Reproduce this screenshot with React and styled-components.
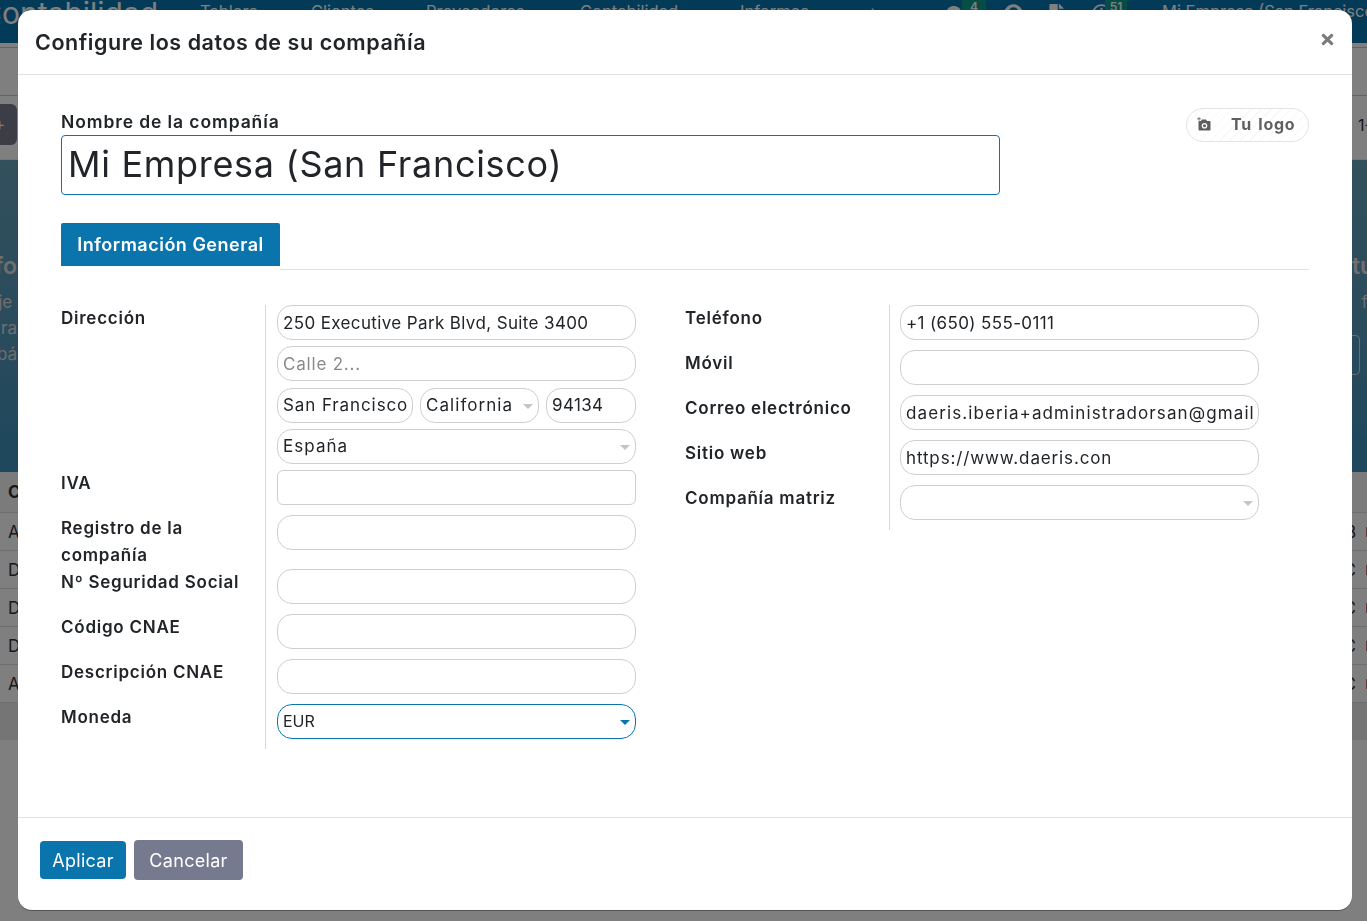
import React from 'react';
import styled, { createGlobalStyle } from 'styled-components';
import { FaTimes, FaComments, FaQuestionCircle, FaFile, FaRegClock } from 'react-icons/fa';

const Global = createGlobalStyle`
  html, body { margin: 0; height: 100%; overflow: hidden; }
  body { font-family: Inter, "Noto Sans", sans-serif; color: #212529; background: #fff; }
  * { box-sizing: border-box; }
`;

/* ---- page behind the dialog ---- */
const Page = styled.div`
  height: 921px;
  display: flex;
  flex-direction: column;
  overflow: hidden;
`;

const TopBar = styled.header`
  height: 43px;
  flex: none;
  background: #0674b0;
  color: #fff;
  display: flex;
  align-items: flex-start;
  padding-top: 1px;
  white-space: nowrap;
  overflow: hidden;
`;

const AppName = styled.div`
  font-size: 30px;
  line-height: 30px;
  width: 220px;
  flex: none;
  margin: -3px 0 0 -20px;
`;

const NavItem = styled.div`
  font-size: 16.5px;
  line-height: 20px;
  width: ${p => p.$w}px;
  flex: none;
`;

const NavIcon = styled.div`
  width: ${p => p.$w}px;
  flex: none;
  position: relative;
  font-size: 19px;
  padding-top: 3px;
  svg { display: block; }
`;

const NavBadge = styled.span`
  position: absolute;
  top: -1px;
  left: ${p => p.$left}px;
  width: ${p => p.$w}px;
  height: 13px;
  background: #0a9a8a;
  font-size: 12px;
  line-height: 13px;
  font-weight: 600;
  text-align: center;
`;

const ControlPanel = styled.section`
  height: 117px;
  flex: none;
  background: #fff;
  border-bottom: 1px solid #eee;
  display: flex;
  flex-direction: column;
`;

const PanelLine = styled.div`
  height: 5px;
  border-bottom: 1px solid #c8c8c8;
  flex: none;
`;

const PanelSearch = styled.div`
  height: 48px;
  border-bottom: 1px solid #c8c8c8;
  flex: none;
`;

const PanelRow = styled.div`
  flex: 1;
  display: flex;
  justify-content: space-between;
  align-items: center;
  font-size: 16px;
  padding-bottom: 6px;
`;

const NewButton = styled.div`
  width: 17px;
  height: 41px;
  background: #787a8e;
  border-radius: 0 6px 6px 0;
  color: #fff;
  font-size: 17px;
  line-height: 41px;
  text-indent: -6px;
  overflow: hidden;
`;

const Pager = styled.div`
  width: 9px;
  overflow: hidden;
  color: #333;
`;

const Banner = styled.section`
  height: 312px;
  flex: none;
  background: linear-gradient(180deg, #66a0b8 0%, #4d94b8 70%, #3b8fb8 100%);
  color: #fff;
  display: flex;
  justify-content: space-between;
  padding-top: 92px;
`;

const BannerSide = styled.div`
  width: ${p => p.$w}px;
  overflow: hidden;
  display: flex;
  flex-direction: column;
  align-items: ${p => p.$end ? 'flex-end' : 'flex-start'};
`;

const BannerTitle = styled.div`
  font-size: 23px;
  font-weight: 600;
  line-height: 28px;
  margin-bottom: 9px;
  color: #ddd;
`;

const BannerLine = styled.div`
  font-size: 17px;
  line-height: 26px;
  color: #ddd;
`;

const BannerButton = styled.div`
  width: 8px;
  height: 40px;
  margin-top: 20px;
  border: 1px solid #ddd;
  border-left: 0;
  border-radius: 0 5px 5px 0;
`;

const Table = styled.section`
  flex: none;
  background: #fff;
`;

const HeadRow = styled.div`
  height: 41px;
  background: #f6f6f6;
  display: flex;
  align-items: center;
  padding-left: 8px;
  font-weight: 700;
  font-size: 17px;
  color: #333;
  border-bottom: 1px solid #ddd;
`;

const BodyRow = styled.div`
  height: 38px;
  display: flex;
  justify-content: space-between;
  align-items: center;
  padding-left: 8px;
  font-size: 17px;
  color: #333;
  border-bottom: 1px solid #ddd;
`;

const RowEnd = styled.span`
  display: flex;
  align-items: center;
  gap: 10px;
  margin-right: -2px;
  &::after {
    content: '';
    width: 3px;
    height: 10px;
    background: #d0707f;
  }
`;

const TableFoot = styled.div`
  height: 37px;
  background: #ebebeb;
`;

/* ---- dialog ---- */
const Backdrop = styled.div`
  position: fixed;
  inset: 0;
  background: rgba(0, 0, 0, 0.5);
`;

const Modal = styled.div`
  position: fixed;
  left: 18px;
  top: 10px;
  width: 1334px;
  height: 900px;
  background: #fff;
  border-radius: 14px;
  display: flex;
  flex-direction: column;
  box-shadow: 0 1px 0 rgba(0, 0, 0, 0.35);
`;

const ModalHeader = styled.div`
  height: 65px;
  flex: none;
  border-bottom: 1px solid #dee2e6;
  display: flex;
  align-items: center;
  justify-content: space-between;
  padding: 0 16px 1px 17px;
`;

const Title = styled.h4`
  margin: 0;
  font-size: 21.5px;
  font-weight: 600;
  letter-spacing: 0.55px;
  color: #212529;
`;

const Close = styled.button`
  border: 0;
  padding: 0;
  background: none;
  color: #7b7b7b;
  display: flex;
  font-size: 17px;
  margin-bottom: 5px;
`;

const ModalBody = styled.div`
  flex: 1;
  padding: 33px 43px 0;
`;

const NameRow = styled.div`
  display: flex;
  justify-content: space-between;
  align-items: flex-start;
  min-height: 120px;
`;

const NameBlock = styled.div`
  width: 939px;
`;

const NameLabel = styled.label`
  display: block;
  font-size: 17.5px;
  font-weight: 600;
  letter-spacing: 0.9px;
  line-height: 27px;
  height: 27px;
`;

const NameInput = styled.input`
  display: block;
  width: 100%;
  height: 60px;
  border: 1px solid #0a75ad;
  border-radius: 4px;
  padding: 0 6px 2px;
  font: 400 36px Inter, sans-serif;
  letter-spacing: 0.7px;
  color: #212529;
  outline: none;
`;

const LogoButton = styled.div`
  width: 123px;
  height: 34px;
  border: 1px solid #e4e4e8;
  border-radius: 17px;
  display: flex;
  align-items: center;
  gap: 19px;
  padding: 0 0 2px 9px;
  color: #5f5f5f;
  font-size: 16px;
  font-weight: 700;
  letter-spacing: 0.7px;
  word-spacing: 2px;
  background: repeating-linear-gradient(-45deg, #fff 0 6px, #f7f7f7 6px 7px);
`;

const TabBar = styled.div`
  display: flex;
  height: 47px;
  margin-top: -5px;
  border-bottom: 1px solid #dee2e6;
`;

const Tab = styled.div`
  width: 219px;
  height: 47px;
  flex: none;
  background: #0a75ad;
  background-clip: padding-box;
  border-bottom: 4px solid #fff;
  border-radius: 2px 2px 0 0;
  color: #fff;
  font-size: 18px;
  font-weight: 600;
  letter-spacing: 0.5px;
  display: flex;
  align-items: center;
  justify-content: center;
`;

const Columns = styled.div`
  display: grid;
  grid-template-columns: 624px 624px;
  margin-top: 35px;
`;

const FormGrid = styled.div`
  display: grid;
  grid-template-columns: 204px 371px;
  align-content: start;
`;

const Label = styled.div`
  font-size: 17px;
  font-weight: 600;
  letter-spacing: 0.75px;
  line-height: 27px;
  padding-right: 14px;
`;

const Field = styled.div`
  border-left: 1px solid #d8d8d8;
  padding: 0 ${p => p.$right ? 1 : 0}px ${p => p.$bottom ?? 10}px ${p => p.$right ? 10 : 11}px;
  display: flex;
  flex-direction: column;
  gap: ${p => p.$gap || 0}px;
`;

const TextInput = styled.input`
  display: block;
  width: ${p => p.$w ? `${p.$w}px` : '100%'};
  flex: none;
  height: 35px;
  border: 1px solid #cfcfcf;
  border-radius: ${p => p.$square ? 6 : 15}px;
  padding: 0 5px;
  font: 400 17px Inter, sans-serif;
  letter-spacing: ${p => p.$ls ?? 0.37}px;
  color: #212529;
  outline: none;
  &::placeholder { color: #8a8a8a; opacity: 1; }
`;

const Select = styled.div`
  position: relative;
  width: ${p => p.$w ? `${p.$w}px` : '100%'};
  flex: none;
  height: 35px;
  border: 1px solid ${p => p.$active ? '#0a75ad' : '#cfcfcf'};
  border-radius: 15px;
  padding: 0 5px;
  display: flex;
  align-items: center;
  font-size: ${p => p.$active ? 16 : 17}px;
  letter-spacing: ${p => p.$active ? 0 : 1.05}px;
  &::after {
    content: '';
    position: absolute;
    right: 5px;
    top: 15px;
    border: 5px solid transparent;
    border-bottom: 0;
    border-top: 5px solid ${p => p.$active ? '#0a75ad' : '#c4c4c4'};
  }
`;

const CityRow = styled.div`
  display: flex;
  gap: 7px;
`;

const ModalFooter = styled.div`
  height: 93px;
  flex: none;
  border-top: 1px solid #dee2e6;
  display: flex;
  align-items: center;
  gap: 8px;
  padding: 0 0 8px 22px;
`;

const Button = styled.button`
  height: ${p => p.$primary ? 38 : 40}px;
  width: ${p => p.$primary ? 86 : 109}px;
  border: 0;
  border-radius: 4px;
  background: ${p => p.$primary ? '#0a75ad' : '#757a8f'};
  color: #fff;
  font: 400 18px Inter, sans-serif;
  letter-spacing: 0.3px;
`;

function CameraPlus() {
  return (
    <svg width="16" height="15" viewBox="0 0 16 15" fill="#5f5f5f" aria-hidden="true">
      <path d="M3.4 2.2H5V1.400H3.400V0h-.8v1.400H1v.8h1.600v1.500h.8V2.200z" />
      <path fillRule="evenodd" d="M6 2.500h4l1 1.500h2.500a1 1 0 0 1 1 1v7.500a1 1 0 0 1-1 1h-10a1 1 0 0 1-1-1V5a1 1 0 0 1 1-1H5l1-1.500zM8.500 6a2.800 2.800 0 1 0 0 5.600 2.800 2.800 0 0 0 0-5.600zm0 1.300a1.500 1.500 0 1 1 0 3 1.500 1.500 0 0 1 0-3z" />
    </svg>
  );
}

const rowsBehind = ['A', 'D', 'D', 'D', 'A'];

export default function App() {
  return (
    <>
      <Global />
      <Page>
        <TopBar>
          <AppName>Contabilidad</AppName>
          <NavItem $w={111}>Tablero</NavItem>
          <NavItem $w={115}>Clientes</NavItem>
          <NavItem $w={154}>Proveedores</NavItem>
          <NavItem $w={160}>Contabilidad</NavItem>
          <NavItem $w={127}>Informes</NavItem>
          <NavItem $w={80}>+</NavItem>
          <NavIcon $w={57}><FaComments /><NavBadge $left={15} $w={24}>4</NavBadge></NavIcon>
          <NavIcon $w={43}><FaQuestionCircle /></NavIcon>
          <NavIcon $w={45}><FaFile /></NavIcon>
          <NavIcon $w={70}><FaRegClock /><NavBadge $left={13} $w={22}>51</NavBadge></NavIcon>
          <NavItem $w={220}>Mi Empresa (San Francisco)</NavItem>
        </TopBar>
        <ControlPanel>
          <PanelLine />
          <PanelSearch />
          <PanelRow>
            <NewButton>+</NewButton>
            <Pager>1-</Pager>
          </PanelRow>
        </ControlPanel>
        <Banner>
          <BannerSide $w={17} $end>
            <BannerTitle>Info</BannerTitle>
            <BannerLine>je&nbsp;</BannerLine>
            <BannerLine>ra</BannerLine>
            <BannerLine>bá</BannerLine>
          </BannerSide>
          <BannerSide $w={15}>
            <BannerTitle>tu</BannerTitle>
            <BannerLine>&nbsp;&nbsp;f</BannerLine>
            <BannerButton />
          </BannerSide>
        </Banner>
        <Table>
          <HeadRow>C</HeadRow>
          {rowsBehind.map((l, i) => (
            <BodyRow key={i}>{l}<RowEnd>{i === 0 ? 'B' : 'C'}</RowEnd></BodyRow>
          ))}
          <TableFoot />
        </Table>
      </Page>
      <Backdrop />
      <Modal>
        <ModalHeader>
          <Title>Configure los datos de su compañía</Title>
          <Close aria-label="Cerrar"><FaTimes /></Close>
        </ModalHeader>
        <ModalBody>
          <NameRow>
            <NameBlock>
              <NameLabel>Nombre de la compañía</NameLabel>
              <NameInput readOnly value="Mi Empresa (San Francisco)" />
            </NameBlock>
            <LogoButton><CameraPlus />Tu logo</LogoButton>
          </NameRow>
          <TabBar><Tab>Información General</Tab></TabBar>
          <Columns>
            <FormGrid>
              <Label>Dirección</Label>
              <Field $gap={6.34} $bottom={6}>
                <TextInput readOnly value="250 Executive Park Blvd, Suite 3400" />
                <TextInput readOnly placeholder="Calle 2..." $ls={0.8} />
                <CityRow>
                  <TextInput readOnly $w={136} $ls={0.9} value="San Francisco" />
                  <Select $w={119}>California</Select>
                  <TextInput readOnly $w={90} value="94134" />
                </CityRow>
                <Select>España</Select>
              </Field>
              <Label>IVA</Label>
              <Field><TextInput readOnly $square /></Field>
              <Label>Registro de la compañía</Label>
              <Field><TextInput readOnly /></Field>
              <Label>Nº Seguridad Social</Label>
              <Field><TextInput readOnly /></Field>
              <Label>Código CNAE</Label>
              <Field><TextInput readOnly /></Field>
              <Label>Descripción CNAE</Label>
              <Field><TextInput readOnly /></Field>
              <Label>Moneda</Label>
              <Field><Select $active>EUR</Select></Field>
            </FormGrid>
            <FormGrid>
              <Label>Teléfono</Label>
              <Field $right><TextInput readOnly value="+1 (650) 555-0111" /></Field>
              <Label>Móvil</Label>
              <Field $right><TextInput readOnly /></Field>
              <Label>Correo electrónico</Label>
              <Field $right><TextInput readOnly $ls={1.1} value="daeris.iberia+administradorsan@gmail.com" /></Field>
              <Label>Sitio web</Label>
              <Field $right><TextInput readOnly $ls={0.87} value="https://www.daeris.con" /></Field>
              <Label>Compañía matriz</Label>
              <Field $right><Select /></Field>
            </FormGrid>
          </Columns>
        </ModalBody>
        <ModalFooter>
          <Button $primary>Aplicar</Button>
          <Button>Cancelar</Button>
        </ModalFooter>
      </Modal>
    </>
  );
}
